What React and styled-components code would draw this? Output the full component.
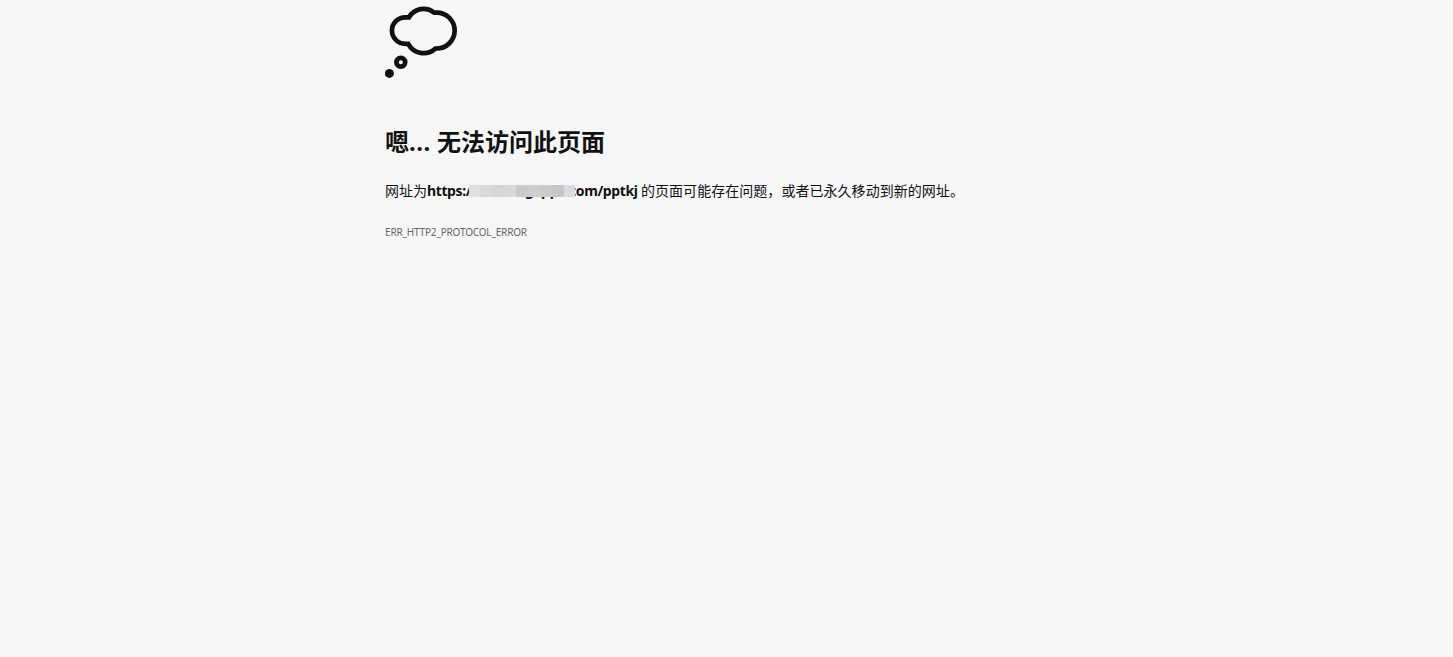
import React from 'react';
import styled, { createGlobalStyle } from 'styled-components';

const mosaic = [
    { size: 11, color: '#dfdfdf' },
    { size: 12, color: '#d9d9d9' },
    { size: 12, color: '#d6d6d6' },
    { size: 12, color: '#d8d8d8' },
    { size: 12, color: '#cacaca' },
    { size: 12, color: '#cecece' },
    { size: 12, color: '#cbcbcb' },
    { size: 12, color: '#c6c6c6' },
    { size: 11, color: '#dadcde' },
];

export default function App() {
    return (
        <Page>
            <GlobalStyle />
            <Content>
                <CloudIcon viewBox="0 0 74 74" fill="none" stroke="#111" strokeWidth="4.7">
                    <path d="M24 13.3A16.8 16.8 0 0 1 49.2 8.6H51.7A17.95 17.95 0 0 1 51.7 44.5H50.5A17.5 17.5 0 0 1 23.2 39.8H20.2A13.25 13.25 0 0 1 20.2 13.3Z" />
                    <circle cx="15.8" cy="58.3" r="4.4" />
                    <circle cx="4.4" cy="69.4" r="4.5" fill="#111" stroke="none" />
                </CloudIcon>
                <Title>
                    嗯<Dots>...</Dots>无法访问此页面
                </Title>
                <Message>
                    <span>网址为</span>
                    <Scheme>https:/</Scheme>
                    <HiddenHost>
                        <HostText $left={56}>g</HostText>
                        <HostText $left={72}>pp</HostText>
                        <Mosaic>
                            {mosaic.map((block, i) => (
                                <Block key={i} $size={block.size} $color={block.color} />
                            ))}
                        </Mosaic>
                    </HiddenHost>
                    <Path>com/pptkj</Path>
                    <Reason>的页面可能存在问题，或者已永久移动到新的网址。</Reason>
                </Message>
                <ErrorCode>ERR_HTTP2_PROTOCOL_ERROR</ErrorCode>
            </Content>
        </Page>
    );
}

const GlobalStyle = createGlobalStyle`
    body {
        margin: 0;
        background: #f6f6f6;
        color: #111;
        font-family: 'Noto Sans', 'Noto Sans CJK SC', sans-serif;
    }
`;

const Page = styled.main`
    min-height: 657px;
    box-sizing: border-box;
    padding: 4px 0 0 385px;
`;

const Content = styled.div`
    display: flex;
    flex-direction: column;
    align-items: flex-start;
`;

const CloudIcon = styled.svg`
    width: 74px;
    height: 74px;
`;

const Title = styled.h1`
    display: flex;
    margin: 46px 0 0;
    font-size: 24px;
    line-height: 36px;
    font-weight: 700;
    white-space: nowrap;
`;

const Dots = styled.span`
    width: 28px;
    letter-spacing: 0.5px;
`;

const Message = styled.p`
    display: flex;
    margin: 21px 0 0;
    font-size: 14px;
    line-height: 20px;
    white-space: nowrap;
`;

const Scheme = styled.strong`
    width: 42px;
    letter-spacing: -0.4px;
`;

const HiddenHost = styled.span`
    position: relative;
    z-index: 1;
    width: 106px;
    height: 20px;
`;

const HostText = styled.strong`
    position: absolute;
    left: ${props => props.$left}px;
    top: 0;
`;

const Mosaic = styled.span`
    position: absolute;
    left: 0;
    top: 4px;
    display: flex;
    height: 12px;
`;

const Block = styled.span`
    width: ${props => props.$size}px;
    background: ${props => props.$color};
`;

/* the first letter slides under the mosaic */
const Path = styled.strong`
    width: 72px;
    margin-left: -6px;
    letter-spacing: -0.4px;
`;

const Reason = styled.span`
    letter-spacing: 0.04px;
`;

const ErrorCode = styled.div`
    margin-top: 23px;
    color: #666;
    font-size: 10px;
    line-height: 16px;
    letter-spacing: -0.17px;
`;
